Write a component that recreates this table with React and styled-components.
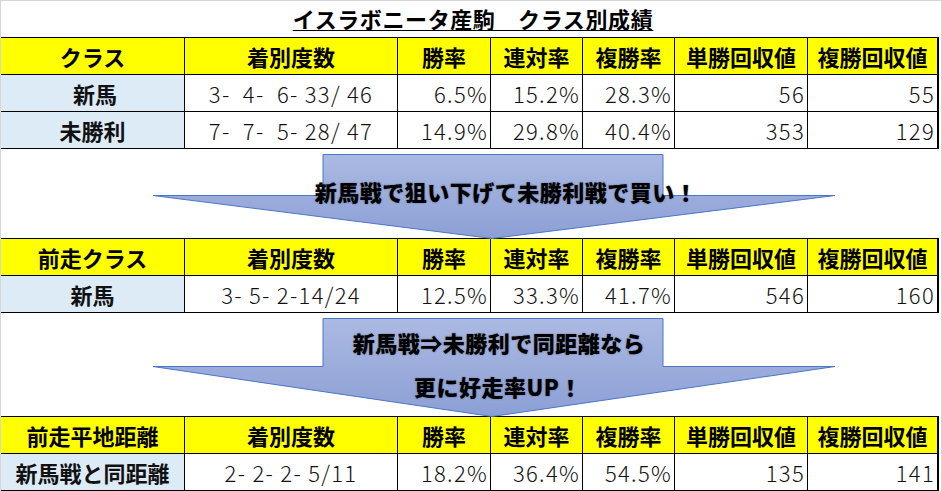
import React from 'react';
import styled, { createGlobalStyle } from 'styled-components';

const GlobalStyle = createGlobalStyle`
  html, body {
    margin: 0;
    padding: 0;
    background: #fff;
  }
  body {
    font-family: "Noto Sans CJK JP", "Noto Sans", sans-serif;
    color: #000;
  }
`;

const COLS = '183px 212px 92px 91px 91px 132px 129px';

const Sheet = styled.div`
  width: 940px;
  height: 490px;
  border-top: 1px solid #d6d6d6;
  border-left: 1px solid #d6d6d6;
  border-right: 1px solid #d6d6d6;
  overflow: hidden;
  display: flex;
  flex-direction: column;
`;

const TitleRow = styled.div`
  height: 36px;
  display: flex;
  justify-content: center;
  align-items: flex-start;
`;

const Title = styled.h1`
  margin: 4px 0 0 0;
  font-size: 22px;
  font-weight: 700;
  line-height: 26px;
  text-decoration: underline;
  text-underline-offset: 2px;
  text-decoration-thickness: 1px;
  letter-spacing: 0.6px;
  padding-left: 4px;
`;

const Grid = styled.div`
  display: grid;
  grid-template-columns: ${COLS};
  grid-auto-rows: 36px;
  gap: 1px;
  padding: 1px 1px 1px 0;
  width: 937px;
  background: #000;
  position: relative;
  z-index: 0;
`;

const Head = styled.div`
  background: #ffff00;
  font-weight: 700;
  font-size: 22px;
  display: flex;
  align-items: center;
  justify-content: center;
  white-space: nowrap;
  color: #000;
`;

const Cell = styled.div`
  background: ${(p) => (p.$label ? '#ddebf7' : '#fff')};
  font-weight: ${(p) => (p.$label ? 700 : 300)};
  font-size: 22px;
  letter-spacing: ${(p) => (p.$label ? '0' : '1.3px')};
  display: flex;
  align-items: center;
  justify-content: ${(p) => (p.$align === 'right' ? 'flex-end' : 'center')};
  padding-right: ${(p) => (p.$align === 'right' ? '2px' : '0')};
  white-space: pre;
  color: #111;
`;

const Band = styled.div`
  position: relative;
  height: ${(p) => p.$h}px;
  z-index: 1;
`;

const ArrowSvg = styled.svg`
  position: absolute;
  left: 0;
  top: 0;
  overflow: visible;
`;

const Caption = styled.div`
  position: absolute;
  left: 0;
  width: 1000px;
  top: ${(p) => p.$top}px;
  margin-left: ${(p) => p.$cx - 500}px;
  text-align: center;
  font-size: 22px;
  font-weight: 900;
  line-height: 26px;
  letter-spacing: 0.5px;
  color: #000;
  text-shadow: 0 0 2px rgba(0, 0, 0, 0.35);
`;

const headers = (first) => [first, '着別度数', '勝率', '連対率', '複勝率', '単勝回収値', '複勝回収値'];

function StatTable({ first, rows }) {
  return (
    <Grid>
      {headers(first).map((h) => (
        <Head key={h}>{h}</Head>
      ))}
      {rows.map((r) => (
        <React.Fragment key={r[0]}>
          <Cell $label>{r[0]}</Cell>
          <Cell>{r[1]}</Cell>
          {r.slice(2).map((v, i) => (
            <Cell key={i} $align="right">
              {v}
            </Cell>
          ))}
        </React.Fragment>
      ))}
    </Grid>
  );
}

function DownArrow({ id, top, wing, tip }) {
  const pts = `322,${top} 662,${top} 662,${wing} 834,${wing} 491,${tip} 152,${wing} 322,${wing}`;
  return (
    <ArrowSvg width="942" height={tip} viewBox={`0 0 942 ${tip}`}>
      <defs>
        <linearGradient id={id} x1="0" y1="0" x2="0" y2="1">
          <stop offset="0" stopColor="#abbae2" />
          <stop offset="1" stopColor="#8c9fd5" />
        </linearGradient>
      </defs>
      <polygon points={pts} fill={`url(#${id})`} stroke="#4a76c6" strokeWidth="1" />
    </ArrowSvg>
  );
}

export default function App() {
  return (
    <>
      <GlobalStyle />
      <Sheet>
        <TitleRow>
          <Title>イスラボニータ産駒　クラス別成績</Title>
        </TitleRow>
        <StatTable
          first="クラス"
          rows={[
            [' 新馬', '3-  4-  6- 33/ 46', '6.5%', '15.2%', '28.3%', '56', '55'],
            ['未勝利', '7-  7-  5- 28/ 47', '14.9%', '29.8%', '40.4%', '353', '129'],
          ]}
        />
        <Band $h={89}>
          <DownArrow id="g1" top={5.5} wing={46.5} tip={89.5} />
          <Caption $top={29} $cx={505}>新馬戦で狙い下げて未勝利戦で買い！</Caption>
        </Band>
        <StatTable
          first="前走クラス"
          rows={[['新馬', '3- 5- 2-14/24', '12.5%', '33.3%', '41.7%', '546', '160']]}
        />
        <Band $h={103}>
          <DownArrow id="g2" top={5.5} wing={53.5} tip={103.5} />
          <Caption $top={16} $cx={498}>新馬戦⇒未勝利で同距離なら</Caption>
          <Caption $top={60} $cx={497}>更に好走率UP！</Caption>
        </Band>
        <StatTable
          first="前走平地距離"
          rows={[['新馬戦と同距離', '2- 2- 2- 5/11', '18.2%', '36.4%', '54.5%', '135', '141']]}
        />
      </Sheet>
    </>
  );
}
